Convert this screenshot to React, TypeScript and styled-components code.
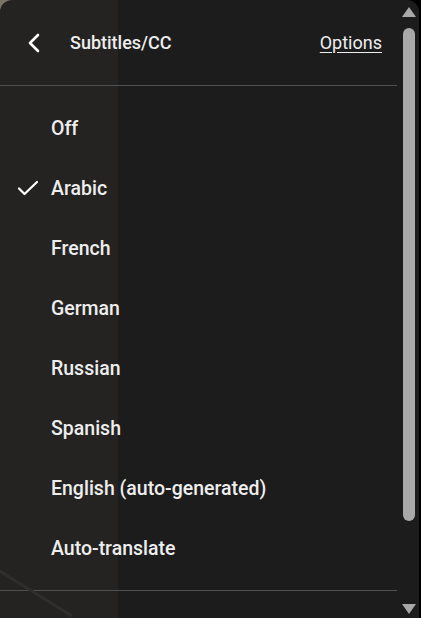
import React from "react";
import styled, { createGlobalStyle } from "styled-components";

const Global = createGlobalStyle`
  html, body { margin: 0; padding: 0; }
  body {
    width: 421px;
    height: 618px;
    overflow: hidden;
    background: linear-gradient(to right, #7a7464 0 118px, #000 118px);
    font-family: Roboto, "Noto Sans", "Liberation Sans", sans-serif;
    -webkit-font-smoothing: antialiased;
  }
`;

const Panel = styled.div`
  position: relative;
  width: 419px;
  height: 640px;
  display: flex;
  border-radius: 12px 12px 0 0;
  overflow: hidden;
  background: linear-gradient(to right, #242321 0 118px, #1c1c1c 118px);
  color: #eeeeee;
`;

const Content = styled.div`
  width: 397px;
  display: flex;
  flex-direction: column;
`;

const Header = styled.div`
  height: 85px;
  display: flex;
  align-items: center;
  padding-left: 24px;
`;

const BackButton = styled.div`
  width: 20px;
  height: 24px;
  display: flex;
  align-items: center;
  justify-content: center;
`;

const Title = styled.div`
  margin-left: 26px;
  font-size: 18px;
  font-weight: 500;
  color: #eeeeee;
`;

const Options = styled.a`
  margin-left: auto;
  margin-right: 15px;
  font-size: 18px;
  font-weight: 400;
  color: #eeeeee;
  text-decoration: underline;
  text-underline-offset: 3px;
`;

const Divider = styled.div`
  height: 1px;
  background: #505050;
`;

const List = styled.div`
  padding: 12px 0 12px;
  display: flex;
  flex-direction: column;
`;

const Item = styled.div`
  height: 60px;
  display: grid;
  grid-template-columns: 51px 1fr;
  align-items: center;
  font-size: 19.5px;
  font-weight: 500;
  color: #eeeeee;
`;

const CheckSlot = styled.div`
  display: flex;
  justify-content: flex-end;
  padding-right: 12px;
`;

const ScrollTrack = styled.div`
  width: 22px;
  display: flex;
  flex-direction: column;
  align-items: center;
  padding-top: 7px;
  height: 618px;
  box-sizing: border-box;
`;

const Arrow = styled.div<{ $down?: boolean }>`
  width: 0;
  height: 0;
  border-left: 7.5px solid transparent;
  border-right: 7.5px solid transparent;
  ${(p) =>
    p.$down
      ? "border-top: 10px solid #a8a8a8;"
      : "border-bottom: 10px solid #a8a8a8;"}
  margin-left: 2px;
`;

const Thumb = styled.div`
  width: 12px;
  height: 493px;
  margin: 11px 0 auto 2px;
  border-radius: 6px;
  background: #a8a8a8;
`;

const BottomArrow = styled.div`
  margin-bottom: 4px;
`;

const Streak = styled.svg`
  position: absolute;
  left: 0;
  bottom: 22px;
  pointer-events: none;
`;

const items = [
  "Off",
  "Arabic",
  "French",
  "German",
  "Russian",
  "Spanish",
  "English (auto-generated)",
  "Auto-translate",
];

export default function App() {
  return (
    <>
      <Global />
      <Panel>
        <Streak width="118" height="60" viewBox="0 0 118 60">
          <path d="M-2 12 L72 58" stroke="#2f2e2b" strokeWidth="3" fill="none" />
        </Streak>
        <Content>
          <Header>
            <BackButton>
              <svg width="14" height="20" viewBox="0 0 14 20">
                <path
                  d="M11 2 L3 10 L11 18"
                  stroke="#ffffff"
                  strokeWidth="2.6"
                  fill="none"
                  strokeLinecap="round"
                  strokeLinejoin="round"
                />
              </svg>
            </BackButton>
            <Title>Subtitles/CC</Title>
            <Options>Options</Options>
          </Header>
          <Divider />
          <List>
            {items.map((label) => (
              <Item key={label}>
                <CheckSlot>
                  {label === "Arabic" && (
                    <svg width="22" height="16" viewBox="0 0 22 16">
                      <path
                        d="M2 8.5 L7.5 14 L20 2"
                        stroke="#ffffff"
                        strokeWidth="2.2"
                        fill="none"
                        strokeLinecap="round"
                        strokeLinejoin="round"
                      />
                    </svg>
                  )}
                </CheckSlot>
                <span>{label}</span>
              </Item>
            ))}
          </List>
          <Divider />
        </Content>
        <ScrollTrack>
          <Arrow />
          <Thumb />
          <BottomArrow>
            <Arrow $down />
          </BottomArrow>
        </ScrollTrack>
      </Panel>
    </>
  );
}
